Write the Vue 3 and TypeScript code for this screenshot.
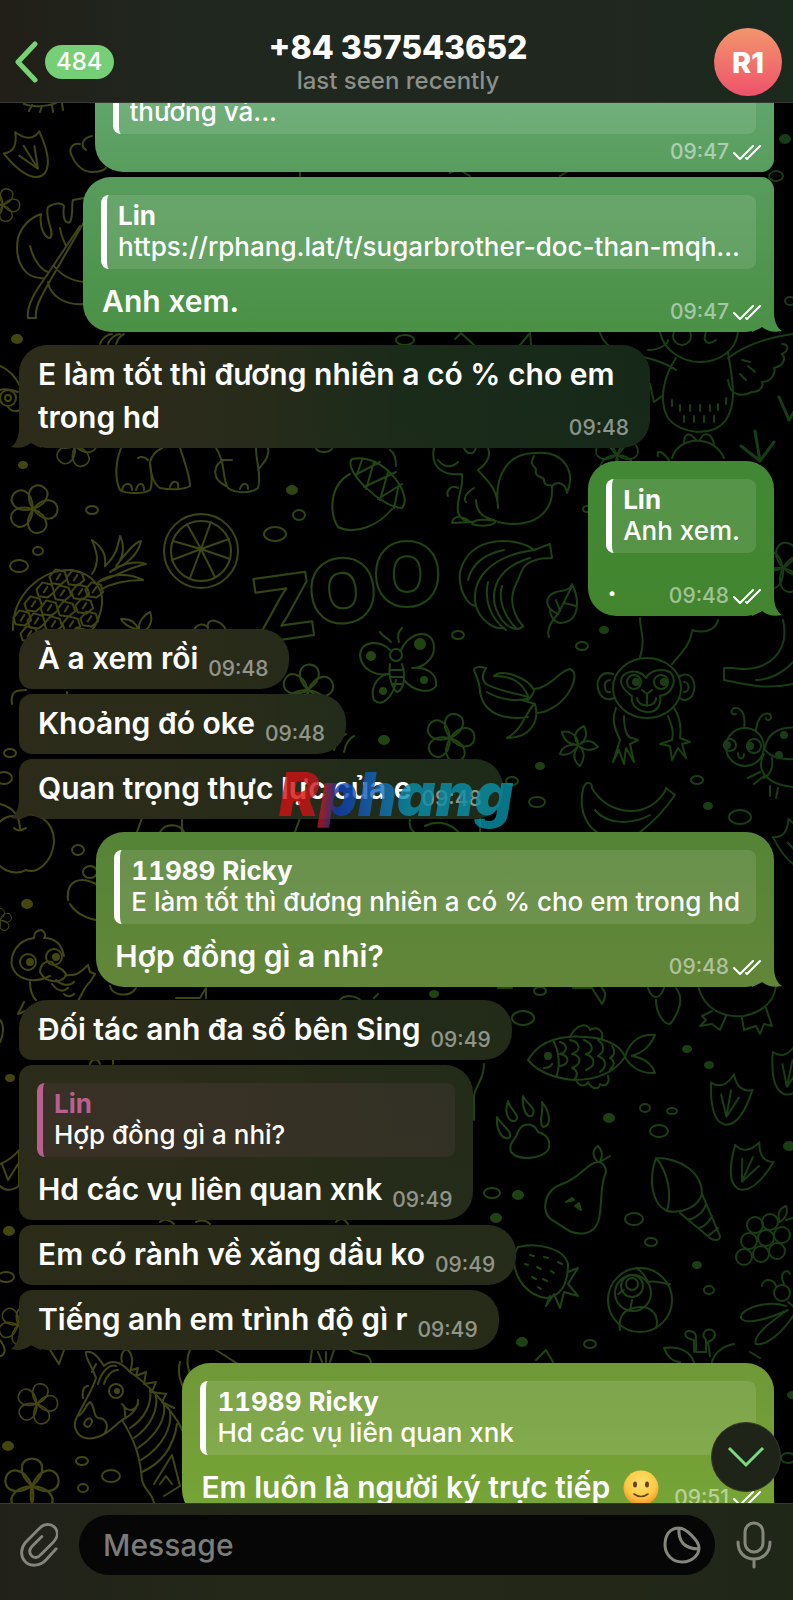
<script setup lang="ts">
import { ref } from 'vue'

interface Quote {
  name?: string
  text: string
  accent?: 'pink'
}

interface Message {
  id: number
  own: boolean
  text?: string
  time: string
  quote?: Quote
  emoji?: boolean
  wrap?: boolean
  wide?: boolean
  first?: boolean
  last?: boolean
}

const messages: Message[] = [
  { id: 1, own: true, time: '09:47', wide: true, quote: { text: 'thương và...' } },
  {
    id: 2,
    own: true,
    time: '09:47',
    text: 'Anh xem.',
    last: true,
    quote: { name: 'Lin', text: 'https://rphang.lat/t/sugarbrother-doc-than-mqh...' },
  },
  {
    id: 3,
    own: false,
    time: '09:48',
    text: 'E làm tốt thì đương nhiên a có % cho em trong hd',
    wrap: true,
    first: true,
    last: true,
  },
  { id: 4, own: true, time: '09:48', text: '.', first: true, last: true, quote: { name: 'Lin', text: 'Anh xem.' } },
  { id: 5, own: false, time: '09:48', text: 'À a xem rồi', first: true },
  { id: 6, own: false, time: '09:48', text: 'Khoảng đó oke' },
  { id: 7, own: false, time: '09:48', text: 'Quan trọng thực lực của e', last: true },
  {
    id: 8,
    own: true,
    time: '09:48',
    text: 'Hợp đồng gì a nhỉ?',
    first: true,
    last: true,
    quote: { name: '11989 Ricky', text: 'E làm tốt thì đương nhiên a có % cho em trong hd' },
  },
  { id: 9, own: false, time: '09:49', text: 'Đối tác anh đa số bên Sing', first: true },
  {
    id: 10,
    own: false,
    time: '09:49',
    text: 'Hd các vụ liên quan xnk',
    quote: { name: 'Lin', text: 'Hợp đồng gì a nhỉ?', accent: 'pink' },
  },
  { id: 11, own: false, time: '09:49', text: 'Em có rành về xăng dầu ko' },
  { id: 12, own: false, time: '09:49', text: 'Tiếng anh em trình độ gì r', last: true },
  {
    id: 13,
    own: true,
    time: '09:51',
    text: 'Em luôn là người ký trực tiếp',
    emoji: true,
    first: true,
    last: true,
    quote: { name: '11989 Ricky', text: 'Hd các vụ liên quan xnk' },
  },
]

const draft = ref('')

// Wallpaper doodles: [x, y, size, rotation]
const flowers = [
  [75, 446, 22, 10], [33, 509, 25, 20], [308, 690, 26, 5], [450, 738, 25, 15], [37, 1404, 21, 15],
  [32, 1486, 28, 0], [3, 205, 17, 20], [783, 568, 26, 10], [617, 455, 22, 0], [18, 1325, 20, 30], [0, 920, 12, 0],
]
const prints = [
  [30, 156, 1, -32], [729, 1102, 1, 10], [748, 1168, 1, 24], [790, 1072, 1, 12], [798, 845, 1, -20],
]
const pebbles = [
  [92, 510, 6, 4], [299, 515, 6, 5], [275, 534, 11, 7], [38, 551, 5, 4], [19, 566, 9, 6], [10, 753, 6, 4],
  [4, 778, 8, 6], [78, 850, 6, 5], [458, 635, 6, 4], [582, 646, 6, 4], [537, 802, 8, 5], [512, 781, 6, 4],
  [697, 780, 6, 4], [740, 817, 11, 7], [540, 991, 6, 4], [523, 1018, 11, 7], [645, 1108, 5, 4], [672, 1111, 5, 3],
  [659, 1131, 9, 6], [492, 1193, 8, 5], [634, 1219, 9, 6], [651, 1242, 6, 4], [709, 1290, 5, 4], [590, 1344, 6, 4],
  [82, 1461, 6, 4], [111, 1476, 9, 6], [83, 1488, 5, 4], [776, 176, 7, 5], [790, 301, 5, 4], [587, 509, 4, 3],
  [788, 1458, 7, 5], [405, 340, 9, 5], [324, 448, 8, 4], [6, 1277, 8, 5], [90, 872, 7, 6],
]
const dots = [
  [17, 339, 5], [23, 465, 4], [292, 490, 5], [384, 740, 5], [604, 630, 4], [540, 766, 4], [708, 806, 4],
  [434, 994, 4], [687, 1049, 4], [709, 1065, 4], [609, 1118, 5], [518, 1195, 5], [496, 1218, 5], [697, 1265, 4],
  [522, 1342, 5], [9, 1231, 5], [8, 1446, 5], [10, 1078, 4], [27, 904, 5], [785, 139, 5], [789, 1146, 5], [792, 1395, 4],
]
const grapes = [
  [755, 1225], [770, 1222], [749, 1241], [766, 1238], [782, 1235], [744, 1257], [761, 1254], [777, 1251],
]
const pineScales = [
  [58, 577], [75, 578], [45, 590], [62, 593], [80, 592], [94, 590], [33, 604], [49, 608], [66, 609], [84, 606],
  [22, 618], [36, 621], [53, 624], [71, 624], [89, 619], [29, 634], [46, 637], [63, 638], [79, 635],
]
</script>

<template>
  <div class="screen">
    <header class="top">
      <button class="back" type="button" aria-label="Back">
        <svg width="24" height="42" viewBox="0 0 24 42" aria-hidden="true">
          <path d="M21 3 L4 21 L21 39" />
        </svg>
        <span class="badge">484</span>
      </button>
      <div class="peer">
        <h1>+84 357543652</h1>
        <p>last seen recently</p>
      </div>
      <button class="avatar" type="button" aria-label="Profile">R1</button>
    </header>

    <main class="chat">
      <svg class="wallpaper" viewBox="0 103 793 1400" preserveAspectRatio="xMidYMin slice" aria-hidden="true">
        <defs>
          <linearGradient id="ink" gradientUnits="userSpaceOnUse" x1="0" y1="800" x2="793" y2="740">
            <stop offset="0" stop-color="#45460f" />
            <stop offset="0.3" stop-color="#3a4614" />
            <stop offset="0.5" stop-color="#214412" />
            <stop offset="1" stop-color="#173b14" />
          </linearGradient>
          <mask id="doodles" maskUnits="userSpaceOnUse" x="0" y="103" width="793" height="1400">
            <g class="ink">
              <g v-for="(f, i) in flowers" :key="'f' + i" :transform="`translate(${f[0]} ${f[1]}) rotate(${f[3]}) scale(${f[2] / 25})`">
                <path
                  v-for="a in 5"
                  :key="a"
                  :transform="`rotate(${a * 72})`"
                  d="M0 0 C-6 -5 -10 -11 -9 -17 C-8 -27 8 -27 9 -17 C10 -11 6 -5 0 0"
                />
              </g>
              <g v-for="(p, i) in prints" :key="'p' + i" :transform="`translate(${p[0]} ${p[1]}) rotate(${p[3]})`">
                <path d="M-21 -16 C-12 -12 -5 -16 0 -28 C5 -16 12 -12 21 -16 C18 6 12 22 0 23 C-12 22 -18 6 -21 -16Z" />
                <path d="M0 15 L-9 -6 M0 15 V-12 M0 15 L9 -6" />
              </g>
              <ellipse v-for="(p, i) in pebbles" :key="'b' + i" :cx="p[0]" :cy="p[1]" :rx="p[2]" :ry="p[3]" />
              <ellipse v-for="(d, i) in dots" :key="'d' + i" class="solid" :cx="d[0]" :cy="d[1]" :rx="d[2]" :ry="d[2] - 1" />

              <!-- monstera leaf -->
              <path d="M28 318 C26 304 38 288 45 278 C25 280 14 262 18 238 C22 225 30 218 41 214 C39 228 45 238 50 238 C56 234 44 218 48 207 C56 202 62 203 64 206 C62 220 66 224 70 222 C74 214 71 204 73 200 L84 198 M28 318 H36 C34 304 44 292 84 222 M48 282 C50 296 66 306 84 304 M45 278 L80 226 M30 246 C34 262 42 270 48 272 M60 228 C61 236 64 241 66 246 M54 266 C62 276 72 281 84 282" />
              <path d="M92 136 C82 138 80 146 86 150 M80 144 C72 142 68 150 72 156 C76 166 84 172 92 172 C100 172 104 170 106 168 M24 104 C34 108 48 106 56 103 M32 105 L29 111 M42 106 L40 112 M52 105 L53 112 M62 103 L63 110" />
              <!-- animal face at the left edge -->
              <path d="M0 366 C10 370 16 378 20 386 M0 390 C6 388 12 390 18 392 M8 407 C12 412 16 412 20 410" />
              <circle cx="8" cy="398" r="8" />
              <circle cx="8" cy="398" r="3" />
              <path d="M100 344 C102 338 108 334 112 334 M108 344 C110 338 116 334 120 334 M116 344 C118 338 122 335 124 334" />
              <!-- elephant feet -->
              <path d="M121 448 C114 466 116 482 120 490 C126 494 144 494 150 490 C154 482 150 466 150 462 C152 454 158 450 162 448 M150 462 C150 474 154 484 160 488 C170 490 184 490 190 486 C190 476 184 460 180 448 M122 490 C124 482 132 482 132 490 M136 490 C138 482 144 482 144 490 M170 487 C172 480 180 480 178 488 M216 448 C226 462 222 480 228 488 C236 494 252 493 258 488 C262 476 256 462 256 448 M224 460 C214 464 210 478 226 486 M268 448 C270 458 262 464 258 470 M240 489 C242 482 248 482 248 489 M138 458 C142 456 146 458 148 460 M222 460 L232 460" />
              <!-- citrus -->
              <circle cx="201" cy="551" r="37" />
              <circle cx="201" cy="551" r="30" />
              <path d="M201 549 L187 524 M201 549 L211 522 M201 549 L229 539 M201 549 L230 559 M201 549 L215 577 M201 549 L190 578 M201 549 L172 560 M201 549 L173 541" />
              <!-- acorn -->
              <path d="M350 474 C328 486 330 515 338 527 C356 536 380 524 392 509 M352 459 C342 470 382 508 402 508 C414 496 384 452 352 459Z M355 475 L380 462 M364 487 L396 472 M378 499 L402 484 M362 460 L356 477 M374 462 L366 489 M388 472 L380 500 M399 484 L394 508 M396 466 C396 456 393 452 390 450" />
              <!-- pineapple -->
              <path d="M13 630 C12 595 42 568 72 570 C94 574 106 590 101 610 C98 624 90 634 84 640 M92 574 C102 560 94 546 92 540 C104 548 106 556 105 566 C116 556 118 546 120 536 C126 548 122 560 116 566 C124 556 134 542 141 541 C138 556 126 564 110 572 C126 560 142 562 146 564 C126 568 118 576 98 582 C112 572 132 574 143 580 C124 580 110 584 100 590" />
              <g v-for="(s, i) in pineScales" :key="'s' + i" :transform="`translate(${s[0]} ${s[1]}) rotate(-18)`">
                <path d="M-8 -3 L0 -8 L8 -3 V5 L0 8 L-8 4Z M-2 2 L3 -2" />
              </g>
              <!-- zoo sign -->
              <text x="258" y="643" transform="rotate(-8 258 643)">Z</text>
              <text x="312" y="626" transform="rotate(-6 312 626)">O</text>
              <text x="373" y="606">O</text>
              <path d="M140 630 C128 628 122 622 121 619 C132 618 136 624 139 630 C138 620 146 614 150 612 C154 622 148 630 142 632 M194 630 C198 622 206 624 208 628 C206 616 222 620 226 630" />
              <!-- squirrel -->
              <path d="M434 448 C430 468 444 476 462 474 C464 490 456 496 458 512 C460 520 466 522 474 522 M488 448 C492 458 484 466 478 470 C486 480 498 488 498 508 M498 506 C494 476 508 452 536 453 C564 450 576 472 567 493 C566 484 558 480 552 486 C554 512 534 530 498 522 M534 456 C528 466 536 466 536 470 C534 478 544 476 544 480 C544 488 552 484 552 486 M458 488 C450 484 446 492 448 496 M474 488 C464 494 464 500 466 502 M476 500 C476 512 484 518 494 520 M452 523 C454 514 464 516 470 522Z M472 524 C474 518 490 520 496 521 C494 526 480 527 472 524 M438 460 C444 468 452 468 458 462 M464 448 C468 456 474 454 476 448" />
              <!-- owl -->
              <path d="M660 332 C664 352 684 362 700 362 C720 362 736 350 738 332 M676 358 C664 376 658 400 668 418 C680 434 712 438 726 420 C738 400 732 380 728 352 M600 333 C606 350 624 356 640 356 C656 360 668 364 676 370 M648 350 C660 350 668 344 668 340 M728 358 C744 346 764 338 793 334 M728 380 C730 398 744 396 752 392 C760 392 764 386 762 382 C772 382 776 372 774 368 C784 366 786 358 782 354 C790 350 788 344 782 344 M650 384 L654 402 L662 396 M684 444 C684 432 690 432 696 440 M700 440 C704 430 712 434 714 444 M672 458 C678 436 714 434 724 458 M658 456 C656 448 664 452 670 462" />
              <circle cx="682" cy="336" r="9" />
              <path d="M706 332 C702 342 708 346 716 340 M672 400 V406 M680 405 V411 M690 405 V411 M700 405 V411 M710 405 V411 M718 404 V410 M726 398 V404 M684 416 V422 M694 416 V422 M704 416 V422 M714 416 V422 M740 374 L746 380 M748 366 L755 372 M742 360 L750 362" />
              <path d="M789 420 L779 397 M789 420 L800 402 M760 461 L741 446 M760 461 L755 431 M760 461 L774 442" stroke-width="3" />
              <!-- shapes between bubbles -->
              <path d="M455 339 L461 333 L474 345 M520 345 L530 333 L531 345 M450 173 L458 169 L470 176 M300 176 V170 M560 176 L570 170" />
              <!-- banana bunch -->
              <path d="M534 550 C520 538 470 532 460 572 C458 590 468 606 476 606 C470 580 490 556 534 550 M476 606 C480 620 494 630 504 628 M534 550 L550 544 L552 558 C544 558 540 558 536 560 C520 564 522 574 516 584 C508 600 514 616 523 626 C518 632 508 628 502 620 C488 600 490 570 530 558 M488 582 C484 600 490 618 506 630 M468 580 C472 564 484 554 504 550 M502 586 C498 600 504 616 516 628" />
              <!-- leaf -->
              <path d="M549 637 C546 630 552 620 558 614 C544 608 544 596 556 592 C566 590 570 590 572 584 C580 600 580 622 560 623 C554 622 550 616 550 610 M558 614 L572 586 M560 611 L556 600 M564 603 L576 606" />
              <!-- butterfly -->
              <path d="M391 642 C388 638 382 636 380 632 M399 642 C396 634 400 630 402 628 M390 650 C380 640 360 640 360 656 C362 670 376 676 388 674 C376 676 370 690 374 700 C382 708 394 696 396 680 M401 650 C410 630 434 628 434 648 C434 660 422 668 412 668 C426 666 438 674 436 686 C430 694 414 692 404 680 M390 664 C388 676 392 688 397 692 C404 690 406 676 402 664 M390 670 H404 M391 677 H404 M392 684 H403" />
              <circle cx="396" cy="655" r="6" />
              <circle class="solid" cx="371" cy="656" r="4" />
              <circle class="solid" cx="420" cy="644" r="5" />
              <circle class="solid" cx="424" cy="680" r="3" />
              <circle class="solid" cx="383" cy="691" r="3" />
              <!-- peeled banana -->
              <path d="M474 670 C474 666 482 667 486 668 C482 674 482 680 486 684 C500 692 522 694 530 698 C518 702 500 700 487 692 M474 670 C476 676 480 682 480 692 C484 716 508 720 528 717 M494 676 C502 668 528 678 534 690 C534 694 530 698 528 700 M494 676 C512 676 522 682 528 696 M534 689 C550 688 560 670 570 669 C582 674 568 700 552 708 C546 712 542 713 536 713 M534 704 C524 716 522 730 507 738 C530 738 540 722 535 704 L522 700" />
              <!-- monkey -->
              <ellipse cx="647" cy="688" rx="34" ry="30" />
              <path d="M613 674 C600 670 594 682 600 694 C604 700 610 700 614 698 M610 680 C602 680 604 694 610 692 M680 676 C692 670 698 684 692 696 C688 700 684 702 680 698 M684 682 C690 682 690 692 684 692 M646 678 C640 668 620 670 621 682 C622 690 630 694 632 696 C630 706 640 712 648 712 C656 712 662 706 660 696 C672 694 678 680 670 672 C662 668 650 670 646 678 M642 690 L647 694 L652 690 M647 694 V706 M637 698 C638 708 656 708 656 698 M640 657 C646 640 640 630 640 618 M672 664 C684 650 690 644 692 632 M692 630 C704 634 716 630 718 620 M616 708 C610 724 618 734 620 740 L613 762 M624 716 C624 732 628 738 632 738 L638 740 L630 744 L634 762 L626 748 L624 764 L619 750 L613 762 M668 716 C672 726 674 732 672 740 L660 744 L670 746 L672 760 L678 748 L686 758 L682 744 L690 742 L680 738 C682 724 678 714 674 708" />
              <circle cx="634" cy="682" r="7" />
              <circle cx="661" cy="682" r="7" />
              <circle class="solid" cx="636" cy="682" r="3" />
              <circle class="solid" cx="664" cy="682" r="3" />
              <!-- star flower -->
              <path d="M578 744 C572 736 576 730 584 726 C588 734 586 740 580 744 C588 738 594 742 598 747 C590 752 584 750 579 746 C586 752 584 760 580 766 C572 760 574 752 578 746 C572 754 566 756 560 754 C562 746 570 744 578 745 C568 744 564 740 562 732 C570 730 578 736 578 744" />
              <!-- beetle -->
              <ellipse cx="745" cy="747" rx="19" ry="19" />
              <circle cx="754" cy="746" r="7" />
              <circle cx="730" cy="745" r="6" />
              <circle class="solid" cx="750" cy="746" r="3" />
              <circle class="solid" cx="727" cy="745" r="3" />
              <path d="M738 753 C738 760 744 760 744 754 M744 728 C746 716 742 708 736 708 C730 708 730 716 736 714 M756 730 C758 716 764 712 770 714 C774 720 766 722 766 718 M765 748 C768 730 784 726 800 728 M765 750 C776 762 790 758 800 760 M764 754 C756 768 764 784 793 787 M760 772 L748 778 M764 776 L754 784 M770 786 L770 796 M778 788 L776 798 M772 758 C774 770 768 776 764 778" />
              <circle class="solid" cx="784" cy="735" r="3" />
              <circle class="solid" cx="779" cy="755" r="3" />
              <!-- bananas at the right edge -->
              <path d="M783 620 C790 650 770 674 732 668 L724 668 L724 680 C744 684 764 690 793 684 M756 680 C770 680 784 672 793 662" />
              <path d="M583 789 C586 780 592 782 592 788 C606 812 636 818 656 802 C662 796 666 792 666 788 L675 795 C666 808 656 820 640 832 M583 789 C578 812 588 828 600 834 M595 810 C608 826 634 824 650 815" />
              <!-- apple -->
              <path d="M20 818 C8 812 0 822 0 822 M20 818 C34 808 54 820 54 842 C52 864 36 874 26 870 C16 876 4 870 0 866 M14 828 C18 832 22 830 26 828 M20 830 C20 820 16 808 0 804 M68 900 C66 880 80 876 96 884 M70 904 C76 914 86 918 96 920 M137 832 L142 818 M160 832 C166 822 180 824 184 832 M182 820 V832 M295 832 L300 818 M410 820 C408 828 414 834 420 834 M425 826 C440 818 454 826 460 834 M480 818 V832" />
              <path d="M334 750 C336 740 342 736 346 734 M344 752 C346 742 350 738 354 736 M12 704 C10 690 18 690 26 690 M67 692 V700" />
              <!-- duckling -->
              <path d="M34 938 C34 932 38 930 42 930 C46 934 46 936 44 938 C56 938 62 946 64 956 M34 938 C16 940 10 956 12 966 C16 980 34 984 50 976 M40 972 C46 984 64 984 66 974 C62 966 56 970 52 962 C44 960 40 966 40 972 M66 975 C78 976 80 972 88 965 L90 972 L95 974 L90 982 C84 986 82 996 76 1004 M30 982 C30 990 32 996 36 1000 M52 984 C58 992 64 992 68 988 M56 980 C62 986 70 986 74 982 M64 994 C68 998 72 996 74 994 M24 1002 L18 1014 L28 1010 L30 1016 M110 986 C112 996 130 998 136 988 M176 998 L200 998 L206 988 L206 998 M340 1000 C344 994 356 996 360 1000 M374 998 L378 994" />
              <circle cx="28" cy="962" r="8" />
              <circle cx="54" cy="957" r="8" />
              <circle class="solid" cx="30" cy="962" r="3" />
              <circle class="solid" cx="56" cy="957" r="3" />
              <path d="M0 1164 C10 1160 16 1154 19 1150 V1186 C10 1192 4 1190 0 1186 M2 1164 L8 1180 L18 1164 M0 1020 C4 1024 4 1034 0 1042 M90 1064 C92 1058 98 1058 100 1064 M113 1064 V1060 M160 1222 C164 1218 170 1220 174 1224 M196 1222 C204 1218 208 1222 210 1224 M336 1222 C340 1216 346 1220 348 1224" />
              <!-- fish -->
              <path d="M528 1060 C542 1036 570 1034 596 1038 C614 1042 622 1048 625 1057 C616 1070 600 1080 574 1080 C552 1078 538 1072 528 1060Z M553 1040 C560 1052 560 1068 556 1077 M625 1057 C630 1038 644 1034 655 1035 C650 1046 644 1052 632 1056 C644 1058 652 1064 655 1073 C640 1074 630 1066 625 1057 M570 1037 C576 1024 588 1022 590 1030 C596 1026 604 1030 602 1038 M576 1080 C580 1088 586 1086 588 1082 C592 1090 600 1090 600 1084 C606 1088 610 1082 608 1076 M560 1042 C568 1044 568 1052 560 1054 C570 1056 570 1064 560 1066 M570 1040 C580 1042 582 1050 572 1054 C582 1056 582 1064 572 1068 C578 1070 578 1076 574 1080 M584 1040 C594 1044 594 1052 586 1054 C596 1058 596 1066 586 1070 M598 1040 C606 1046 604 1052 598 1056 C608 1060 606 1068 600 1072 M612 1046 C616 1052 614 1056 610 1058 C616 1062 614 1066 610 1070" />
              <circle class="solid" cx="548" cy="1056" r="3" />
              <path d="M552 1064 C550 1068 546 1068 544 1068" />
              <!-- paw -->
              <path d="M511 1152 C508 1142 516 1140 518 1132 C522 1122 534 1122 538 1132 C546 1134 552 1140 548 1150 C542 1158 520 1162 511 1152Z M497 1117 C496 1130 502 1140 509 1138 C514 1132 502 1126 497 1117Z M508 1101 C504 1112 508 1122 515 1121 C522 1116 510 1110 508 1101Z M523 1096 C522 1108 526 1118 532 1116 C538 1108 526 1104 523 1096Z M542 1102 C544 1112 538 1122 543 1127 C552 1126 550 1112 542 1102Z" />
              <!-- pear -->
              <path d="M598 1162 C588 1162 580 1178 562 1184 C544 1190 540 1212 552 1220 C564 1226 570 1236 586 1233 C608 1228 596 1194 606 1172 C606 1166 602 1162 598 1162Z M598 1162 C592 1156 592 1150 598 1146 C604 1152 602 1158 600 1162 L610 1156" />
              <path class="solid" d="M566 1202 L572 1198 L574 1200 Z M575 1206 L579 1203 L581 1210 Z" />
              <!-- shell -->
              <path d="M656 1158 C648 1180 652 1204 667 1211 C672 1194 668 1172 656 1158 C680 1158 702 1172 702 1194 C698 1208 680 1214 667 1211 M702 1194 L720 1236 C720 1242 712 1240 710 1238 L680 1213 M706 1204 C704 1212 696 1218 688 1220 M712 1216 C708 1224 702 1228 698 1228 M718 1228 C714 1232 710 1234 708 1236" />
              <!-- grapes -->
              <circle v-for="(g, i) in grapes" :key="'g' + i" :cx="g[0]" :cy="g[1]" r="8" />
              <path d="M780 1222 C776 1214 780 1208 786 1206 C788 1212 786 1218 780 1222 M786 1220 L793 1218" />
              <!-- strawberry -->
              <path d="M518 1247 C536 1242 564 1248 568 1264 C568 1282 562 1296 546 1298 C530 1296 516 1282 514 1262 C514 1256 516 1250 518 1247 M568 1272 L578 1268 L568 1284 L578 1296 L564 1292 L560 1308 L554 1294 L546 1306 L550 1296 M530 1255 L534 1256 M544 1257 L548 1258 M558 1262 L562 1264 M525 1264 L528 1265 M537 1267 L541 1269 M551 1271 L554 1273 M532 1277 L536 1279 M543 1279 L547 1281 M538 1287 L541 1289" />
              <!-- snail shell -->
              <circle cx="640" cy="1300" r="32" />
              <circle cx="633" cy="1293" r="18" />
              <circle cx="632" cy="1286" r="11" />
              <circle cx="632" cy="1284" r="6" />
              <path d="M620 1330 C618 1316 624 1310 634 1308 C650 1304 660 1314 656 1328 M648 1282 C654 1280 664 1284 670 1284 M636 1268 C644 1272 646 1278 648 1282 M618 1294 L624 1290 M630 1310 L632 1300" />
              <!-- bee -->
              <circle cx="782" cy="1293" r="8" />
              <path d="M776 1286 C772 1276 762 1280 762 1286 M784 1284 C778 1272 788 1268 790 1274 M788 1302 L800 1312 M786 1306 C768 1300 740 1308 741 1318 C746 1326 770 1318 788 1310 C770 1322 752 1336 756 1344 C768 1346 784 1330 793 1316 M750 1352 L760 1358" />
              <!-- giraffe -->
              <path d="M664 1348 C680 1346 690 1352 694 1362 M694 1352 V1340 C682 1338 684 1330 690 1331 C698 1332 696 1338 696 1352 H706 V1340 C700 1334 706 1328 712 1330 C718 1334 714 1340 708 1342 L710 1356 M734 1344 C722 1346 714 1354 712 1362 M664 1348 C668 1358 674 1362 680 1362 M536 1360 L546 1350 L553 1362" />
              <!-- webbed feet -->
              <path d="M698 986 C704 1010 724 1018 744 1016 C762 1012 774 1002 776 986 M712 1011 L702 1016 L706 1020 L700 1026 L712 1024 L720 1030 L726 1016 M742 1018 L744 1030 L756 1026 L760 1034 L764 1024 L772 1026 L766 1008 M648 988 C652 1000 660 1000 664 988 M656 1000 C656 1014 664 1024 670 1024 C680 1012 684 998 676 988 M573 988 H592 L602 1004 C606 998 606 992 602 988 M498 988 H512 M484 1064 C484 1080 476 1084 474 1096 V1120" />
              <!-- zebra -->
              <path d="M96 1378 C92 1366 84 1356 86 1352 C94 1350 100 1360 104 1366 M92 1372 L96 1364 M122 1362 C120 1354 124 1348 128 1350 C134 1356 132 1366 130 1372 M104 1366 C110 1360 120 1360 130 1372 C146 1382 176 1414 182 1430 M96 1378 C92 1392 78 1412 75 1422 C74 1434 82 1440 94 1438 C106 1436 114 1426 122 1420 C130 1416 138 1410 138 1400 M122 1420 C136 1442 140 1458 142 1480 C144 1490 152 1492 154 1503 M78 1416 C84 1414 86 1404 90 1402 C96 1408 92 1414 98 1418 C106 1418 110 1426 104 1434 M83 1398 C82 1390 84 1386 88 1386 M84 1424 C86 1418 92 1416 92 1422 C90 1428 86 1428 84 1424 M98 1384 C102 1370 110 1364 116 1366 M104 1384 C106 1376 112 1370 118 1370 M122 1404 C128 1412 134 1412 138 1404 M124 1406 C126 1412 124 1416 126 1418" />
              <path d="M130 1428 C146 1418 152 1402 150 1390 M134 1438 C152 1426 158 1408 156 1396 M138 1448 C158 1434 166 1418 164 1404 M141 1460 C164 1446 172 1426 170 1412 M142 1472 C164 1462 174 1444 177 1424 M132 1370 L138 1368 L136 1376 L146 1372 L144 1384 L156 1382 L152 1392 L166 1394 L162 1402 L174 1408 M154 1484 L172 1455 L180 1486 L164 1496 M160 1484 L166 1476 L172 1484 M180 1362 C176 1376 184 1390 190 1398 M190 1350 C184 1362 190 1378 196 1382 M216 1350 L238 1364 M50 1350 L59 1364 L64 1350" />
              <circle cx="116" cy="1391" r="7" />
              <circle class="solid" cx="117" cy="1391" r="2" />
              <path d="M312 1350 L310 1364 M318 1352 L322 1362 M326 1352 V1362 M334 1350 L330 1362 M350 1350 C360 1358 370 1350 371 1364 M0 1340 C8 1350 4 1356 0 1356" />
            </g>
          </mask>
        </defs>
        <rect x="0" y="103" width="793" height="1400" fill="url(#ink)" mask="url(#doodles)" />
      </svg>

      <ol class="messages">
        <li
          v-for="m in messages"
          :key="m.id"
          class="bubble"
          :class="{
            own: m.own,
            peerside: !m.own,
            first: m.first,
            last: m.last,
            wrap: m.wrap,
            wide: m.wide,
            quoted: m.quote,
          }"
        >
          <blockquote v-if="m.quote" class="quote" :class="m.quote.accent">
            <strong v-if="m.quote.name">{{ m.quote.name }}</strong>
            <span>{{ m.quote.text }}</span>
          </blockquote>
          <div class="body" :class="{ bare: !m.text }">
            <p v-if="m.text" class="text">
              {{ m.text }}
              <svg v-if="m.emoji" class="smile" viewBox="0 0 36 36" role="img" aria-label="Slightly smiling face">
                <defs>
                  <radialGradient id="face" cx="0.5" cy="0.35" r="0.65">
                    <stop offset="0" stop-color="#ffe26a" />
                    <stop offset="0.65" stop-color="#fdc944" />
                    <stop offset="1" stop-color="#ee9227" />
                  </radialGradient>
                </defs>
                <circle cx="18" cy="18" r="17.5" fill="url(#face)" />
                <ellipse cx="12" cy="14.5" rx="2" ry="3" fill="#68401a" />
                <ellipse cx="24" cy="14.5" rx="2" ry="3" fill="#68401a" />
                <path d="M11 24 Q18 29 25 24" fill="none" stroke="#68401a" stroke-width="1.6" stroke-linecap="round" />
              </svg>
            </p>
            <span class="meta">
              <time>{{ m.time }}</time>
              <svg v-if="m.own" class="ticks" width="28" height="17" viewBox="0 0 28 17" role="img" aria-label="Read">
                <path d="M1 9 L7 15 L20 2 M13 14 L14 15 L27 2" />
              </svg>
            </span>
          </div>
          <span v-if="m.id === 7" class="brand">Rphang</span>
        </li>
      </ol>

      <button class="jump" type="button" aria-label="Scroll to latest">
        <svg width="38" height="22" viewBox="0 0 38 22" aria-hidden="true"><path d="M2 2 L19 19 L36 2" /></svg>
      </button>
    </main>

    <form class="composer" @submit.prevent>
      <button class="tool" type="button" aria-label="Attach">
        <svg width="38" height="44" viewBox="0 0 40 46" aria-hidden="true">
          <path
            d="M38 27 L28 38 C21 46 10 46 5 40 C0 34 1 26 6 20 L20 6 C25 0 33 0 37 5 C41 10 39 16 35 20 L22 33 C19 37 14 37 12 34 C9 31 10 27 13 24 L23 14"
          />
        </svg>
      </button>
      <div class="field">
        <input v-model="draft" type="text" placeholder="Message" aria-label="Message" />
        <button class="tool" type="button" aria-label="Stickers">
          <svg width="38" height="38" viewBox="0 0 38 38" aria-hidden="true">
            <path d="M16 2 C6 2 2 10 2 19 C2 29 10 36 19 36 C29 36 36 29 36 22 C36 15 23 2 16 2Z M16 2 C15 15 21 23 36 23" />
          </svg>
        </button>
      </div>
      <button class="tool" type="button" aria-label="Record voice message">
        <svg width="36" height="48" viewBox="0 0 36 48" aria-hidden="true">
          <rect x="9" y="2" width="18" height="29" rx="9" />
          <path d="M2 21 C2 32 9 38 18 38 C27 38 34 32 34 21 M18 38 V46" />
        </svg>
      </button>
    </form>
  </div>
</template>

<style>
body {
  margin: 0;
  background: #000;
}
</style>

<style scoped>
.screen {
  display: flex;
  flex-direction: column;
  height: 100vh;
  overflow: hidden;
  background: #000;
  color: #fff;
  font-family: Inter, 'Noto Sans', sans-serif;
}

button {
  padding: 0;
  border: 0;
  background: none;
  color: inherit;
  font: inherit;
}

svg {
  display: block;
  flex: none;
}

.top {
  display: grid;
  grid-template-columns: 1fr auto 1fr;
  align-items: end;
  box-sizing: border-box;
  height: 103px;
  padding: 0 11px 6px 14px;
  border-bottom: 1px solid #343a33;
  background: linear-gradient(90deg, #211f17, #20271f 22%, #20271f 75%, #1c291d);
}

.back {
  display: flex;
  align-items: center;
  gap: 7px;
  height: 68px;
  justify-self: start;
}

.back path {
  fill: none;
  stroke: #76d474;
  stroke-width: 5;
  stroke-linecap: round;
  stroke-linejoin: round;
}

.badge {
  padding: 0 11px;
  border-radius: 17px;
  background: #76cf76;
  font-size: 24px;
  font-weight: 500;
  line-height: 34px;
}

.peer {
  text-align: center;
}

h1 {
  margin: 0;
  font-size: 32px;
  font-weight: 800;
  line-height: 36px;
}

.peer p {
  margin: 0;
  color: #8b908a;
  font-size: 24px;
  font-weight: 500;
  line-height: 30px;
}

.avatar {
  justify-self: end;
  width: 68px;
  height: 68px;
  border-radius: 50%;
  background: linear-gradient(#f2966c, #ee526b);
  font-size: 29px;
  font-weight: 800;
}

.chat {
  position: relative;
  flex: 1;
  min-height: 0;
  overflow: hidden;
}

.wallpaper {
  position: absolute;
  top: 0;
  left: 0;
  width: 100%;
  height: 100%;
}

.ink {
  fill: none;
  stroke: #fff;
  stroke-width: 2;
  stroke-linecap: round;
  stroke-linejoin: round;
}

.ink text {
  font-size: 88px;
  font-weight: 900;
}

.ink .solid {
  fill: #fff;
}

.messages {
  position: relative;
  display: flex;
  flex-direction: column;
  gap: 5px;
  margin: -30px 0 0;
  padding: 0 19px;
  list-style: none;
}

.bubble {
  position: relative;
  max-width: calc(100% - 61px);
  border-radius: 28px;
  background-attachment: fixed;
}

.bubble.first:not(:first-child) {
  margin-top: 8px;
}

.own {
  align-self: flex-end;
  border-top-right-radius: 13px;
  border-bottom-right-radius: 13px;
  background-image: linear-gradient(
    #60a56b 100px,
    #589c5c 180px,
    #4a9045 332px,
    #428834 461px,
    #43852f 616px,
    #558436 832px,
    #628639 987px,
    #6f9838 1362px,
    #76a436 1503px
  );
}

.peerside {
  align-self: flex-start;
  border-top-left-radius: 13px;
  border-bottom-left-radius: 13px;
  background-image: linear-gradient(rgba(42, 44, 24, 0) 400px, rgba(42, 44, 24, 0.8) 1350px),
    linear-gradient(90deg, #2e2b1a, #292b1a 30%, #1b2b1a 50%, #162919 80%);
}

.wrap {
  max-width: 631px;
}

.wide {
  width: 90%;
}

.own.first {
  border-top-right-radius: 28px;
}

.peerside.first {
  border-top-left-radius: 28px;
}

.own.last {
  border-bottom-right-radius: 28px;
}

.peerside.last {
  border-bottom-left-radius: 28px;
}

/* Tail of the last bubble in a group */
.last::after {
  content: '';
  position: absolute;
  bottom: 0;
  z-index: -1;
  width: 30px;
  height: 30px;
  background-image: inherit;
  background-attachment: fixed;
}

.last {
  z-index: 0;
}

.own.last::after {
  right: -8px;
  clip-path: path('M22 0 V10 C22 19 25 26 30 29 C22 31 15 29 10 25 L0 30 V0 Z');
}

.peerside.last::after {
  left: -8px;
  clip-path: path('M8 0 V10 C8 19 5 26 0 29 C8 31 15 29 20 25 L30 30 V0 Z');
}

.quote {
  display: grid;
  margin: 0 18px;
  padding: 5px 16px 6px 11px;
  border-left: 6px solid #fff;
  border-radius: 8px;
  background: rgba(255, 255, 255, 0.11);
  font-size: 26px;
  font-weight: 500;
  line-height: 32px;
  white-space: nowrap;
}

.quoted {
  padding-top: 18px;
}

.quote span {
  overflow: hidden;
  text-overflow: ellipsis;
}

.quote strong {
  font-weight: 700;
  font-variant-numeric: tabular-nums;
  line-height: 31px;
}

.pink {
  border-color: #b8608f;
  background: rgba(184, 96, 143, 0.1);
}

.pink strong {
  color: #b8608f;
}

.body {
  display: flex;
  align-items: flex-end;
  justify-content: space-between;
  gap: 10px;
  padding: 8px 21px 9px 19px;
}

.quoted .body {
  padding-top: 11px;
}

.own .body {
  gap: 15px;
  padding-right: 13px;
}

.quoted .bare {
  justify-content: flex-end;
  padding-top: 5px;
}

.wrap .body {
  display: grid;
}

.wrap .text,
.wrap .meta {
  grid-area: 1 / 1;
}

.wrap .meta {
  justify-self: end;
}

.text {
  display: flex;
  align-items: center;
  gap: 13px;
  margin: 0;
  font-size: 30px;
  font-weight: 600;
  line-height: 43px;
}

.smile {
  width: 36px;
  height: 36px;
}

.meta {
  display: flex;
  flex: none;
  align-items: center;
  gap: 4px;
  margin-bottom: -2px;
  color: rgba(255, 255, 255, 0.5);
  font-size: 21px;
  font-weight: 500;
  line-height: 26px;
}

.meta time {
  white-space: nowrap;
}

.ticks path {
  fill: none;
  stroke: #fff;
  stroke-width: 2;
  stroke-linecap: round;
  stroke-linejoin: round;
}

.brand {
  position: absolute;
  top: 0;
  left: 260px;
  background: linear-gradient(95deg, #d01212 12%, #b01c30 20%, #0c3cb4 26%, #1468b8 42%, #0a8fae 56%, #0893a8);
  background-clip: text;
  color: transparent;
  font-size: 60px;
  font-style: italic;
  font-weight: 900;
  line-height: 70px;
  opacity: 0.8;
  pointer-events: none;
}

.jump {
  position: absolute;
  right: 12px;
  bottom: 11px;
  display: grid;
  place-items: center;
  width: 70px;
  height: 70px;
  border: 1px solid #34382b;
  border-radius: 50%;
  background: #1f2418;
}

.jump path {
  fill: none;
  stroke: #7bd981;
  stroke-width: 3;
}

.composer {
  display: flex;
  align-items: center;
  gap: 21px;
  box-sizing: border-box;
  height: 97px;
  padding: 0 21px 15px 20px;
  border-top: 1px solid #34382c;
  background: linear-gradient(90deg, #21211a, #232818 30%, #232718 75%, #1f2719);
}

.tool path,
.tool rect {
  fill: none;
  stroke: #85877f;
  stroke-width: 3;
  stroke-linecap: round;
  stroke-linejoin: round;
}

.field {
  display: flex;
  flex: 1;
  align-items: center;
  box-sizing: border-box;
  height: 60px;
  padding: 0 14px 0 24px;
  border-radius: 30px;
  background: #060606;
}

input {
  flex: 1;
  min-width: 0;
  padding: 0;
  border: 0;
  outline: 0;
  background: none;
  color: #fff;
  font: 500 30px Inter, 'Noto Sans', sans-serif;
}

input::placeholder {
  color: #7b7b7b;
  opacity: 1;
}
</style>
